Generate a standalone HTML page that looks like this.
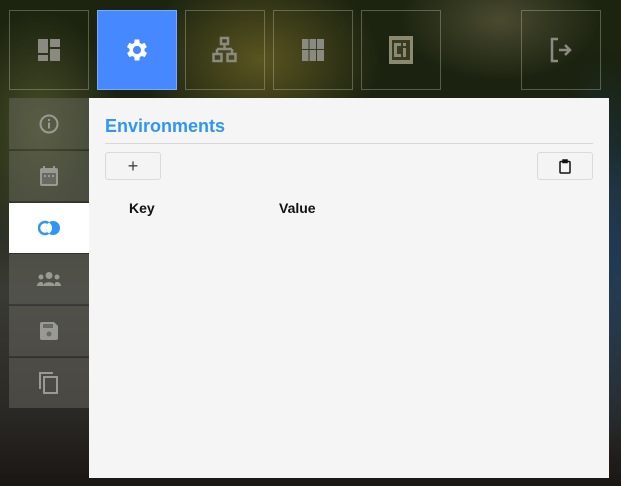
<!DOCTYPE html>
<html><head><meta charset="utf-8"><style>
*{margin:0;padding:0;box-sizing:border-box}
body{width:621px;height:486px;overflow:hidden;position:relative;font-family:"Liberation Sans",sans-serif;
background:
radial-gradient(ellipse 60px 200px at 605px 260px,#1d3a5a 0%,rgba(29,58,90,0) 100%),
radial-gradient(ellipse 120px 90px at 260px 60px,#5a5420 0%,rgba(90,84,32,0) 100%),
radial-gradient(ellipse 80px 120px at 40px 130px,#4a5028 0%,rgba(74,80,40,0) 100%),
radial-gradient(ellipse 100px 60px at 500px 20px,#4a4a30 0%,rgba(74,74,48,0) 100%),
linear-gradient(180deg,#1c2410 0%,#1a2210 30%,#3a3a34 60%,#2a2824 85%,#1a1614 100%);}
.tb{position:absolute;top:10px;width:80px;height:80px;border:1px solid rgba(200,200,180,.35);display:flex;align-items:center;justify-content:center}
.tb svg{fill:#8a8a80}
.act{background:#4588ff;border-color:#7aaaff}
.sb{position:absolute;left:9px;width:80px;background:rgba(110,110,105,.45);display:flex;align-items:center;justify-content:center;border-bottom:1px solid rgba(30,30,30,.4)}
.sb svg{fill:#9a9a95}
.panel{position:absolute;left:89px;top:98px;width:520px;height:380px;background:#f5f5f5}
h1{position:absolute;left:16px;top:18px;font-size:18px;color:#2f96f3;font-weight:bold}
.hr{position:absolute;left:16px;right:16px;top:45px;border-top:1px solid #d8d8d8}
.btn{position:absolute;top:54px;width:56px;height:28px;border:1px solid #dadada;border-radius:3px;background:#f4f4f4;display:flex;align-items:center;justify-content:center}
.th{position:absolute;top:102px;font-size:14px;font-weight:bold;color:#111}
</style></head><body>
<div class="tb" style="left:9px"><svg width="26" height="26" viewBox="0 0 26 26"><rect x="2" y="2" width="10" height="14"/><rect x="14" y="2" width="10" height="8"/><rect x="14" y="12" width="10" height="12"/><rect x="2" y="18" width="10" height="6"/></svg></div>
<div class="tb act" style="left:97px"><svg width="28" height="28" viewBox="0 0 24 24" style="fill:#fff"><path d="M19.4 13a7.5 7.5 0 0 0 0-2l2.1-1.6-2-3.5-2.5 1a7.3 7.3 0 0 0-1.7-1L15 3h-4l-.4 2.9a7.3 7.3 0 0 0-1.7 1l-2.5-1-2 3.5L6.6 11a7.5 7.5 0 0 0 0 2l-2.1 1.6 2 3.5 2.5-1a7.3 7.3 0 0 0 1.7 1L11 21h4l.4-2.9a7.3 7.3 0 0 0 1.7-1l2.5 1 2-3.5zM13 15.5a3.5 3.5 0 1 1 0-7 3.5 3.5 0 0 1 0 7z" transform="translate(-1 0)"/></svg></div>
<div class="tb" style="left:185px"><svg width="26" height="28" viewBox="0 0 26 28" style="fill:none;stroke:#8a8a80;stroke-width:2.5"><rect x="9" y="2" width="7" height="6"/><path d="M12.5 8v5M5 13h15M5 13v5M20 13v5"/><rect x="1.5" y="18" width="8" height="7"/><rect x="15.5" y="18" width="8" height="7"/></svg></div>
<div class="tb" style="left:273px"><svg width="22" height="22" viewBox="0 0 22 22"><rect x="0" y="0" width="22" height="22"/><path d="M7 0v22M14.5 0v22M0 10.5h22" stroke="#3a3a20" stroke-width="1"/></svg></div>
<div class="tb" style="left:361px"><svg width="24" height="28" viewBox="0 0 24 28"><rect x="0" y="0" width="24" height="28" fill="#8a8a70"/><rect x="3" y="4" width="18" height="20" fill="#3a3a20"/><path d="M5 7h7v3H8v8h4v3H5z" fill="#8a8a70"/><rect x="14" y="7" width="3" height="3" fill="#8a8a70"/><rect x="14" y="12" width="3" height="9" fill="#8a8a70"/></svg></div>
<div class="tb" style="left:521px"><svg width="22" height="26" viewBox="0 0 22 26" style="fill:none;stroke:#8a8a80;stroke-width:2.5"><path d="M8 2H2v22h6M9 13h11M15 8l5 5-5 5"/></svg></div>

<div class="sb" style="top:98px;height:52px"><svg width="20" height="20" viewBox="0 0 20 20"><circle cx="10" cy="10" r="8.5" fill="none" stroke="#9a9a95" stroke-width="2"/><rect x="9" y="8.5" width="2" height="6"/><rect x="9" y="5" width="2" height="2"/></svg></div>
<div class="sb" style="top:151px;height:51px"><svg width="18" height="20" viewBox="0 0 18 20"><rect x="0" y="2" width="18" height="18" rx="2"/><rect x="3" y="0" width="2" height="4"/><rect x="13" y="0" width="2" height="4"/><rect x="2" y="7" width="14" height="11" fill="#6a6a62"/><rect x="4" y="9" width="2" height="2"/><rect x="8" y="9" width="2" height="2"/><rect x="12" y="9" width="2" height="2"/></svg></div>
<div class="sb" style="top:203px;height:50px;background:#fff;border:none"><svg width="22" height="16" viewBox="0 0 22 16"><circle cx="7" cy="8" r="6" fill="none" stroke="#2f96f3" stroke-width="2.5"/><circle cx="15" cy="8" r="7" fill="#2f96f3"/><path d="M11 2.5a6.5 6.5 0 0 1 0 11a6.5 6.5 0 0 1 0-11z" fill="#fff"/></svg></div>
<div class="sb" style="top:254px;height:51px"><svg width="24" height="14" viewBox="0 0 24 14"><circle cx="12" cy="3.5" r="3.5"/><circle cx="4" cy="5" r="2.5"/><circle cx="20" cy="5" r="2.5"/><path d="M6 14c0-5 12-5 12 0zM0 14c0-4 5-5 6-3v3zM24 14c0-4-5-5-6-3v3z"/></svg></div>
<div class="sb" style="top:306px;height:51px"><svg width="18" height="18" viewBox="0 0 18 18"><path d="M2 0h12l4 4v12a2 2 0 0 1-2 2H2a2 2 0 0 1-2-2V2a2 2 0 0 1 2-2z"/><rect x="3" y="2" width="10" height="4" fill="#6a6a62"/><circle cx="9" cy="12" r="2.5" fill="#6a6a62"/></svg></div>
<div class="sb" style="top:358px;height:50px;border:none"><svg width="20" height="22" viewBox="0 0 20 22" style="fill:none;stroke:#9a9a95;stroke-width:2"><path d="M1 17V1h13"/><rect x="5" y="5" width="13" height="16"/></svg></div>

<div class="panel">
<h1>Environments</h1>
<div class="hr"></div>
<div class="btn" style="left:16px;font-size:18px;color:#444;line-height:1">+</div>
<div class="btn" style="left:448px"><svg width="12" height="15" viewBox="0 0 12 15" style="fill:none;stroke:#111;stroke-width:1.5"><rect x="1" y="2.5" width="10" height="11.5" rx="1"/><rect x="4" y="1" width="4" height="2.5" fill="#111"/></svg></div>
<div class="th" style="left:40px">Key</div>
<div class="th" style="left:190px">Value</div>
</div>
</body></html>
